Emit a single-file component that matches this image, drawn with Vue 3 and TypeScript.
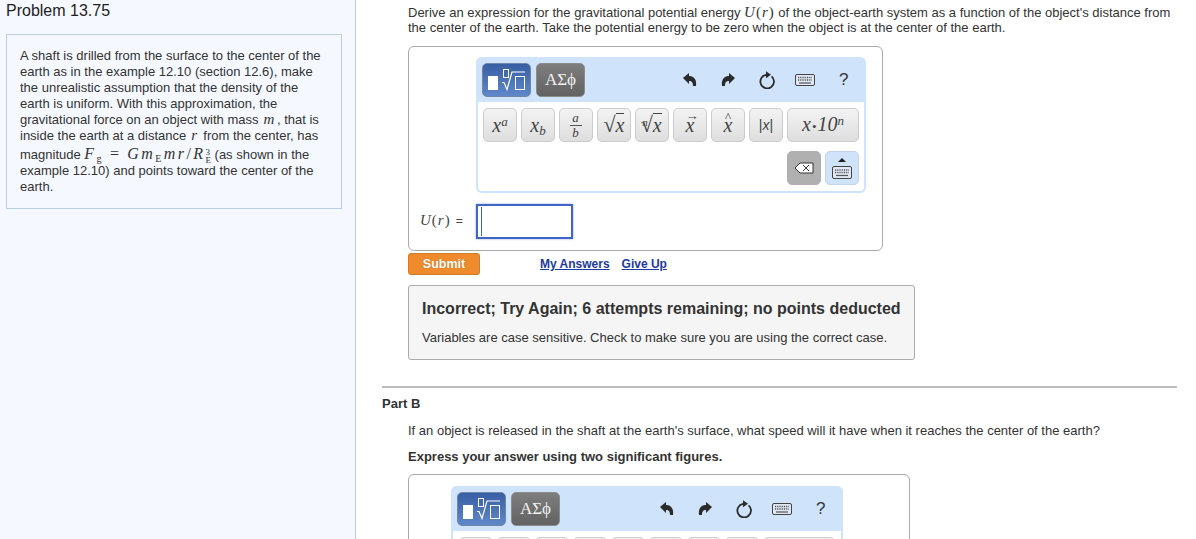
<template>
  <div class="page">
    <aside class="sidebar">
      <h1 class="problem-title">Problem 13.75</h1>
      <div class="intro">
        A shaft is drilled from the surface to the center of the earth as in the example 12.10 (section 12.6), make
        the unrealistic assumption that the density of the earth is uniform. With this approximation, the gravitational
        force on an object with mass <i class="m pad">m</i>, that is inside the earth at a distance <i class="m pad">r</i> from
        the center, has magnitude
        <span class="m formula"><i>F</i><sub>g</sub><span class="eq">=</span><i>Gm</i><sub>E</sub><i>mr</i>/<i>R</i><span class="subsup"><span>3</span><span>E</span></span></span>
        (as shown in the example 12.10) and points toward the center of the earth.
      </div>
    </aside>

    <main class="content">
      <p class="prompt">
        Derive an expression for the gravitational potential energy <span class="m"><i>U</i>(<i>r</i>)</span> of the
        object-earth system as a function of the object's distance from the center of the earth. Take the potential
        energy to be zero when the object is at the center of the earth.
      </p>

      <template v-for="ed in editors" :key="ed.id">
        <div v-if="ed.id === 'b'" class="part-b">
          <hr class="rule" />
          <h2 class="part-title">Part B</h2>
          <p class="question">If an object is released in the shaft at the earth's surface, what speed will it have when it reaches the center of the earth?</p>
          <p class="instruction">Express your answer using two significant figures.</p>
        </div>

        <div class="answer-box" :class="ed.id">
          <div class="panel">
            <div class="bar">
              <button class="mode blue">
                <svg width="38" height="24" viewBox="0 0 38 24" fill="none" stroke="#fff">
                  <rect x="0" y="8" width="10" height="14" fill="#fff" stroke="none" />
                  <rect x="15.5" y="1.5" width="5" height="8" />
                  <path d="M14 14.5l2 0 3 7 5-17.500h13" stroke-width="1.200" />
                  <rect x="27.500" y="8.500" width="9" height="13" />
                </svg>
              </button>
              <button class="mode grey">ΑΣϕ</button>
              <div class="tools">
                <span class="tool">
                  <svg width="16" height="16" viewBox="0 0 16 16"><path d="M1 6 7 1v3c4 0 8 2.500 7 10h-3c0-3.500-1-5-4-5v3z" fill="#2b2b2b" /></svg>
                </span>
                <span class="tool">
                  <svg width="16" height="16" viewBox="0 0 16 16"><path d="M15 6 9 1v3C5 4 1 6.500 2 14h3c0-3.500 1-5 4-5v3z" fill="#2b2b2b" /></svg>
                </span>
                <span class="tool">
                  <svg width="18" height="18" viewBox="0 0 18 18" fill="none"><path d="M13.600 5.400A6.800 6.800 0 1 1 8 3.900" stroke="#2b2b2b" stroke-width="1.800" /><path d="M8 .3l5 3.500-5 3.500z" fill="#2b2b2b" /></svg>
                </span>
                <span class="tool">
                  <svg width="20" height="12" viewBox="0 0 20 12" fill="none"><rect x=".5" y=".5" width="19" height="11" rx="1.500" stroke="#444" fill="#dfe8f4" /><path d="M3 3.500h14M3 6h14" stroke="#555" stroke-width="1.400" stroke-dasharray="1 .8" /><path d="M4 9h12" stroke="#555" stroke-width="1.200" /></svg>
                </span>
                <span class="tool help">?</span>
              </div>
            </div>

            <div class="keys">
              <button class="key"><span class="m big"><i>x</i><sup><i>a</i></sup></span></button>
              <button class="key"><span class="m big"><i>x</i><sub><i>b</i></sub></span></button>
              <button class="key">
                <span class="frac m"><i>a</i><i class="den">b</i></span>
              </button>
              <button class="key"><span class="m big"><span class="radical">√</span><i class="over">x</i></span></button>
              <button class="key"><span class="m big"><sup class="root"><i>n</i></sup><span class="radical">√</span><i class="over">x</i></span></button>
              <button class="key"><span class="m big accent arrow"><i>x</i></span></button>
              <button class="key"><span class="m big accent hat"><i>x</i></span></button>
              <button class="key"><span class="abs">|<i>x</i>|</span></button>
              <button class="key wide"><span class="m sci"><i>x</i><span class="dot">•</span><i>10</i><sup><i>n</i></sup></span></button>
              <div class="keys-end">
                <button class="key del">
                  <svg width="20" height="12" viewBox="0 0 20 12" fill="none"><path d="M1 6 6 1h13v10H6z" fill="#fff" stroke="#333" /><path d="m9 3 6 6m0-6-6 6" stroke="#333" /></svg>
                </button>
                <button class="key toggle">
                  <svg width="20" height="22" viewBox="0 0 20 22" fill="none"><path d="M6 5 10 1l4 4z" fill="#222" /><rect x=".5" y="9.500" width="19" height="12" rx="1.500" stroke="#444" fill="#dfe8f4" /><path d="M3 13h14M3 15.500h14" stroke="#555" stroke-width="1.400" stroke-dasharray="1 .8" /><path d="M4 18.500h12" stroke="#555" stroke-width="1.200" /></svg>
                </button>
              </div>
            </div>
          </div>
          <div class="answer-row">
            <span class="answer-label"><span class="m"><i>U</i>(<i>r</i>)</span><span class="equals">=</span></span>
            <span class="answer-input"><span class="caret"></span></span>
          </div>
        </div>

        <div v-if="ed.id === 'a'" class="actions">
          <button class="submit">Submit</button>
          <a class="link first" href="#">My Answers</a>
          <a class="link" href="#">Give Up</a>
        </div>
        <div v-if="ed.id === 'a'" class="feedback">
          <div class="feedback-title">Incorrect; Try Again; 6 attempts remaining; no points deducted</div>
          <div class="feedback-text">Variables are case sensitive. Check to make sure you are using the correct case.</div>
        </div>
      </template>
    </main>
  </div>
</template>

<script setup lang="ts">
// the two answer editors, part A is complete and part B runs off the page
const editors = [{ id: 'a' }, { id: 'b' }]
</script>

<style>
html,
body {
  margin: 0;
  overflow: hidden;
}
</style>

<style scoped>
.page {
  display: flex;
  height: 539px;
  overflow: hidden;
  font-family: "Liberation Sans", Arial, sans-serif;
  font-size: 13px;
  line-height: 16px;
  color: #333;
  background: #fff;
}

/* left column */
.sidebar {
  width: 356px;
  flex: none;
  box-sizing: border-box;
  padding: 0 13px 0 6px;
  background: #f5f9ff;
  border-right: 1px solid #b9cde0;
}

.problem-title {
  margin: 0;
  height: 34px;
  padding-top: 1px;
  box-sizing: border-box;
  font-size: 16px;
  line-height: 20px;
  font-weight: 400;
  color: #222;
}

.intro {
  box-sizing: border-box;
  height: 175px;
  padding: 13px 13px 0;
  border: 1px solid #b9d0e6;
}

.m {
  font-family: "Liberation Serif", "DejaVu Serif", serif;
  font-size: 15px;
  letter-spacing: 1px;
  line-height: 0;
}

.m.pad {
  padding: 0 1.500px;
}

.m sub,
.m sup {
  font-size: 9px;
  line-height: 0;
}

.m sub {
  vertical-align: -3px;
}

.formula {
  font-size: 16px;
  letter-spacing: 2.400px;
  line-height: 19px;
}

.formula sub {
  font-size: 10px;
}

.eq {
  margin: 0 6px;
}

.subsup {
  display: inline-flex;
  flex-direction: column;
  vertical-align: 4px;
  height: 8px;
  font-size: 9px;
  line-height: 8px;
  letter-spacing: 0;
}

/* right column */
.content {
  flex: 1;
  min-width: 0;
  padding: 5px 19px 0 26px;
}

.prompt {
  margin: 0 0 11px 26px;
  line-height: 15px;
}

.answer-box {
  box-sizing: border-box;
  margin-left: 26px;
  border: 1px solid #aaa;
  border-radius: 6px;
}

.answer-box.a {
  width: 475px;
  height: 205px;
  padding: 10px 16px 0 67px;
}

.answer-box.b {
  width: 502px;
  height: 200px;
  padding: 11px 66px 0 42px;
}

.panel {
  box-sizing: border-box;
  border: 2px solid #cfe3fb;
  border-top: 0;
  border-radius: 6px;
  height: 136px;
}

.bar {
  display: flex;
  align-items: center;
  gap: 5px;
  height: 45px;
  margin: 0 -2px;
  padding: 0 6px;
  background: #cfe3fb;
  border-radius: 6px 6px 0 0;
}

.mode {
  box-sizing: border-box;
  width: 49px;
  height: 34px;
  padding: 0;
  display: flex;
  align-items: center;
  justify-content: center;
  border: 1px solid #8a9ab0;
  border-radius: 5px;
  font-family: "Liberation Serif", serif;
  font-size: 17px;
  color: #f2f2f2;
}

.mode.blue {
  background: linear-gradient(#385ea3, #5f88c9);
  border-color: #6f86a8;
}

.mode.grey {
  background: linear-gradient(#7e7e7e, #626262);
  border-color: #8c8c8c;
}

.tools {
  display: flex;
  margin-left: auto;
  margin-right: -3px;
}

.tool {
  display: flex;
  align-items: center;
  justify-content: center;
  width: 38.500px;
  height: 24px;
}

.help {
  font-size: 17px;
  color: #333;
}

.keys {
  display: flex;
  flex-wrap: wrap;
  justify-content: center;
  gap: 9px 4px;
  padding-top: 6px;
}

.key {
  box-sizing: border-box;
  width: 34px;
  height: 34px;
  padding: 0;
  display: flex;
  align-items: center;
  justify-content: center;
  border: 1px solid #ccc;
  border-radius: 5px;
  background: linear-gradient(#f3f3f3, #dedede);
  color: #444;
}

.key.wide {
  width: 72px;
}

.big {
  font-size: 20px;
  line-height: 22px;
  letter-spacing: 0;
}

.big sup,
.big sub {
  font-size: 13px;
}

.big sup {
  vertical-align: 6px;
}

.big sub {
  vertical-align: -3px;
}

.radical {
  font-size: 22px;
  font-weight: 400;
}

.over {
  border-top: 1px solid #444;
}

.root {
  margin-right: -7px;
  font-size: 11px !important;
}

.frac {
  display: flex;
  flex-direction: column;
  align-items: center;
  font-size: 13px;
  line-height: 14px;
}

.den {
  border-top: 1px solid #555;
  padding: 0 2px;
}

.accent {
  position: relative;
  display: block;
}

.accent::before {
  position: absolute;
  left: 0;
  right: 0;
  text-align: center;
  font-style: normal;
  font-size: 13px;
  line-height: 10px;
}

.arrow::before {
  content: "→";
  top: -3px;
}

.hat::before {
  content: "^";
  top: -2px;
}

.abs {
  font-size: 14px;
}

.sci {
  font-size: 20px;
  line-height: 22px;
  letter-spacing: 0;
}

.sci sup {
  font-size: 13px;
  vertical-align: 6px;
}

.dot {
  font-size: 13px;
  margin: 0 1px;
}

.keys-end {
  display: flex;
  justify-content: flex-end;
  gap: 4px;
  width: 100%;
  padding-right: 5px;
  box-sizing: border-box;
}

.key.del {
  background: #b0b0b0;
  border-color: #b0b0b0;
}

.key.toggle {
  background: #cfe3fb;
  border-color: #c2d4ea;
}

.answer-row {
  display: flex;
  align-items: center;
  height: 34px;
  margin: 11px 0 0 -56px;
}

.answer-label {
  width: 56px;
  flex: none;
  color: #444;
}

.equals {
  margin-left: 5px;
  font-size: 12px;
}

.answer-input {
  box-sizing: border-box;
  width: 97px;
  height: 35px;
  display: flex;
  align-items: center;
  padding-left: 3px;
  border: 2px solid #3f66c4;
  box-shadow: 0 0 2px #8aa6e4;
}

.caret {
  width: 1px;
  height: 29px;
  background: #3f66c4;
}

.actions {
  display: flex;
  align-items: center;
  margin: 2px 0 0 26px;
  height: 22px;
}

.submit {
  box-sizing: border-box;
  width: 72px;
  height: 22px;
  padding: 0;
  border: 1px solid #d07a28;
  border-radius: 3px;
  background: #ef8b2c;
  color: #fff;
  font: bold 12.5px "Liberation Sans", Arial, sans-serif;
  text-shadow: 0 0 1px #a8651f;
}

.link {
  margin-left: 12px;
  font-size: 12px;
  font-weight: 700;
  color: #1c3a9b;
}

.link.first {
  margin-left: 60px;
}

.feedback {
  box-sizing: border-box;
  width: 507px;
  height: 75px;
  margin: 10px 0 0 26px;
  padding: 13px 13px 0;
  border: 1px solid #aaa;
  border-radius: 3px;
  background: #f5f5f5;
}

.feedback-title {
  font-size: 16px;
  line-height: 19px;
  font-weight: 700;
  color: #333;
}

.feedback-text {
  margin-top: 12px;
}

.part-b {
  margin-top: 26px;
}

.rule {
  margin: 0;
  border: 0;
  border-top: 2px solid #bbb;
}

.part-title {
  margin: 8px 0 0;
  font-size: 13px;
  line-height: 16px;
  font-weight: 700;
}

.question {
  margin: 11px 0 0 26px;
}

.instruction {
  margin: 10px 0 9px 26px;
  font-weight: 700;
}
</style>
